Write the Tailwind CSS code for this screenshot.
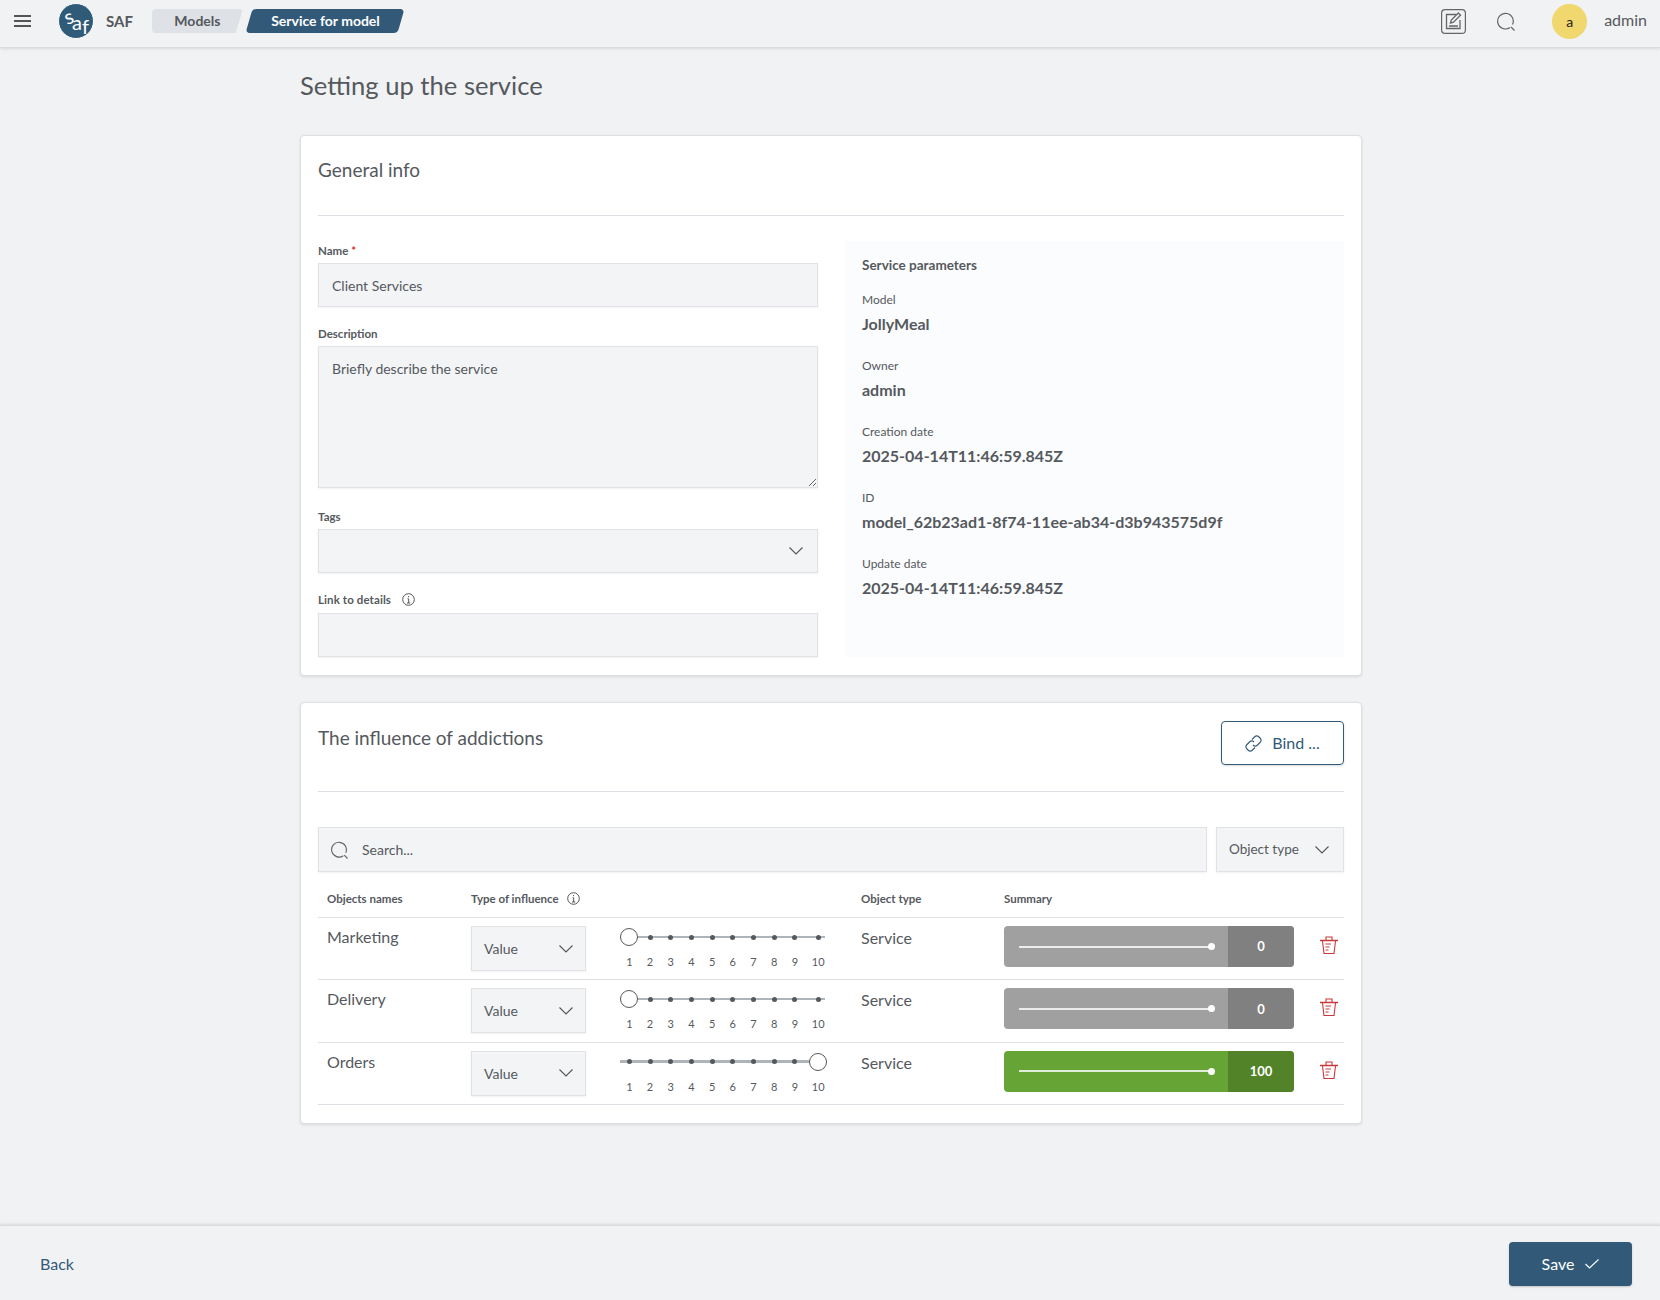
<!DOCTYPE html>
<html lang="en">
    <head>
        <meta charset="UTF-8" />
        <title>Setting up the service</title>
        <script src="https://cdn.jsdelivr.net/npm/@tailwindcss/browser@4"></script>
    </head>
    <body class="w-[1660px] h-[1300px] flex flex-col overflow-hidden bg-[#f1f2f4] text-[#55595e] font-['Lato','Noto_Sans',sans-serif]">
        <header class="h-[48px] pb-[5px] shrink-0 flex items-center bg-[#f1f2f4] border-b border-[#d9dbe0] shadow-[0_1px_3px_rgba(0,0,0,0.1)]">
            <svg class="ml-[14px] w-[17px] h-[14px]" viewBox="0 0 17 14" fill="none" stroke="#555" stroke-width="2">
                <path d="M0 2h17M0 7h17M0 12h17" />
            </svg>
            <div class="relative ml-[27px] w-[36px] h-[36px] rounded-full bg-[#2f5a78] border border-white text-white leading-none">
                <span class="absolute left-[5px] top-[2px] text-[20px] -rotate-[20deg]">s</span>
                <span class="absolute left-[13px] top-[8px] text-[20px]">a</span>
                <span class="absolute left-[23px] top-[12px] text-[20px]">f</span>
            </div>
            <span class="ml-[12px] text-[15px] font-bold">SAF</span>
            <span class="ml-[19px] w-[91px] h-[24px] pb-[2px] flex items-center justify-center bg-[#dee1e5] rounded-[4px] text-[14px] font-bold" style="clip-path: polygon(0 0, 100% 0, 92% 100%, 0 100%)">Models</span>
            <span class="ml-[6px] w-[152px] h-[24px] pb-[2px] flex items-center justify-center bg-[#325a78] text-white rounded-[4px] -skew-x-[16deg]"><span class="skew-x-[16deg] text-[14px] font-bold">Service for model</span></span>
            <svg class="ml-auto w-[25px] h-[25px]" viewBox="0 0 25 25" fill="none" stroke="#666" stroke-width="1.2">
                <rect x="0.6" y="0.6" width="23.8" height="23.8" rx="3.5" />
                <path d="M15 5.500H5.500V19.500H19V11" stroke-width="1.300" />
                <path d="M9.500 14l.8-3 7-7 2.200 2.200-7 7zM8 17h9" stroke-width="1.300" />
            </svg>
            <svg class="ml-[31px] w-[19px] h-[19px]" viewBox="0 0 19 19" fill="none" stroke="#666" stroke-width="1.2">
                <path d="M13 15.500a7.800 7.800 0 1 1 2.500-3M14 15l3.500 3.500" />
            </svg>
            <span class="ml-[36px] w-[35px] h-[35px] rounded-full flex items-center justify-center bg-[#f0d76e] text-[#222] text-[14px]">a</span>
            <span class="ml-[17px] mr-[13px] pb-[2px] text-[16px]">admin</span>
        </header>

        <main class="flex-1 pl-[300px]">
            <h1 class="h-[87px] pb-[12px] flex items-center text-[25.6px] leading-none">Setting up the service</h1>

            <section class="w-[1062px] h-[541px] bg-white border border-[#dcdfe3] rounded-[4px] shadow-[0_1px_3px_rgba(0,0,0,0.1)] px-[17px]">
                <h2 class="h-[80px] pt-[19px] border-b border-[#dcdfe3] text-[19px] leading-[30px]">General info</h2>
                <div class="flex gap-[27px] pt-[25px]">
                    <form class="w-[500px] shrink-0">
                        <label class="block h-[22px] text-[11.5px] font-bold leading-[20px]">Name <span class="text-[#c33]">*</span></label>
                        <input class="w-full h-[44px] px-[13px] bg-[#f3f4f6] border border-[#e0e2e6] shadow-[0_1px_2px_rgba(0,0,0,0.06)] text-[14px]" value="Client Services" />
                        <label class="block mt-[17px] h-[22px] text-[11.5px] font-bold leading-[20px]">Description</label>
                        <textarea class="block w-full h-[142px] px-[13px] py-[11px] bg-[#f3f4f6] border border-[#e0e2e6] shadow-[0_1px_2px_rgba(0,0,0,0.06)] text-[14px]">Briefly describe the service</textarea>
                        <label class="block mt-[19px] h-[22px] text-[11.5px] font-bold leading-[20px]">Tags</label>
                        <div class="h-[44px] pr-[14px] flex items-center justify-end bg-[#f3f4f6] border border-[#e0e2e6] shadow-[0_1px_2px_rgba(0,0,0,0.06)]">
                            <svg class="w-[14px] h-[8px]" viewBox="0 0 14 8" fill="none" stroke="#555" stroke-width="1.100"><path d="M0.500 0.500L7 7l6.500-6.500" /></svg>
                        </div>
                        <label class="flex items-center gap-[11px] mt-[14px] h-[26px] pb-[1px] text-[11.5px] font-bold tracking-[0.1px]">Link to details
                            <svg class="w-[13px] h-[13px]" viewBox="0 0 13 13" fill="none" stroke="#555"><circle cx="6.500" cy="6.500" r="5.800" /><path d="M5.500 5.800h1.200V10M5 10h3.200M6.500 3v1.200" /></svg>
                        </label>
                        <input class="w-full h-[44px] px-[13px] bg-[#f3f4f6] border border-[#e0e2e6] shadow-[0_1px_2px_rgba(0,0,0,0.06)] text-[14px]" />
                    </form>
                    <aside class="flex-1 h-[416px] px-[17px] pt-[14px] bg-[#fbfcfd]">
                        <h3 class="text-[13.5px] font-bold leading-[20px] mb-[16px]">Service parameters</h3>
                        <dl id="params"></dl>
                    </aside>
                </div>
            </section>

            <section class="w-[1062px] h-[422px] mt-[26px] bg-white border border-[#dcdfe3] rounded-[4px] shadow-[0_1px_3px_rgba(0,0,0,0.1)] px-[17px]">
                <div class="h-[89px] flex justify-between border-b border-[#dcdfe3]">
                    <h2 class="pt-[20px] text-[19px] leading-[30px]">The influence of addictions</h2>
                    <button class="mt-[18px] w-[123px] h-[44px] flex items-center justify-center gap-[10px] border border-[#325a78] rounded-[4px] shadow-[0_1px_2px_rgba(0,0,0,0.15)] text-[#325a78] text-[16px]">
                        <svg class="w-[17px] h-[17px]" viewBox="0 0 17 17" fill="none" stroke="#325a78" stroke-width="1.100">
                            <path d="M7 4.500l2.500-2.500a3.200 3.200 0 0 1 4.500 0l1 1a3.200 3.200 0 0 1 0 4.500L12.500 10a3.200 3.200 0 0 1-4.500 0" />
                            <path d="M10 12.500L7.500 15a3.200 3.200 0 0 1-4.500 0l-1-1a3.200 3.200 0 0 1 0-4.500L4.500 7a3.200 3.200 0 0 1 4.500 0" />
                        </svg>
                        Bind ...
                    </button>
                </div>
                <div class="flex gap-[9px] mt-[35px]">
                    <div class="w-[889px] h-[45px] flex items-center gap-[13px] px-[12px] bg-[#f3f4f6] border border-[#e0e2e6] shadow-[0_1px_2px_rgba(0,0,0,0.06)] text-[14px]">
                        <svg class="w-[18px] h-[18px]" viewBox="0 0 19 19" fill="none" stroke="#666" stroke-width="1.200">
                            <path d="M13 15.500a7.800 7.800 0 1 1 2.500-3M14 15l3.500 3.500" />
                        </svg>
                        Search...
                    </div>
                    <div class="flex-1 h-[45px] flex items-center justify-between pl-[12px] pr-[14px] bg-[#f3f4f6] border border-[#e0e2e6] shadow-[0_1px_2px_rgba(0,0,0,0.06)] text-[13.5px]">
                        Object type
                        <svg class="w-[14px] h-[8px]" viewBox="0 0 14 8" fill="none" stroke="#555" stroke-width="1.100"><path d="M0.500 0.500L7 7l6.500-6.500" /></svg>
                    </div>
                </div>
                <div class="h-[46px] pt-[8px] grid grid-cols-[153px_390px_143px_1fr] items-center border-b border-[#dcdfe3] text-[11.5px] font-bold">
                    <span class="pl-[9px]">Objects names</span>
                    <span class="flex items-center gap-[8px]">Type of influence
                        <svg class="w-[13px] h-[13px]" viewBox="0 0 13 13" fill="none" stroke="#555"><circle cx="6.500" cy="6.500" r="5.800" /><path d="M5.500 5.800h1.200V10M5 10h3.200M6.500 3v1.200" /></svg>
                    </span>
                    <span>Object type</span>
                    <span>Summary</span>
                </div>
                <div id="rows"></div>
            </section>
        </main>

        <footer class="h-[75px] pt-[2px] shrink-0 flex items-center justify-between pl-[40px] pr-[28px] border-t border-[#d9dbe0] shadow-[0_-1px_3px_rgba(0,0,0,0.1)]">
            <a class="text-[16px] text-[#325a78]">Back</a>
            <button class="w-[123px] h-[44px] flex items-center justify-center gap-[11px] bg-[#325a78] text-white rounded-[4px] shadow-[0_1px_2px_rgba(0,0,0,0.2)] text-[16px]">
                Save
                <svg class="w-[14px] h-[10px]" viewBox="0 0 14 10" fill="none" stroke="#fff" stroke-width="1.100"><path d="M0.500 5l4 4L13.500 0.500" /></svg>
            </button>
        </footer>

        <script>
            const PARAMS = [
                ["Model", "JollyMeal"],
                ["Owner", "admin"],
                ["Creation date", "2025-04-14T11:46:59.845Z"],
                ["ID", "model_62b23ad1-8f74-11ee-ab34-d3b943575d9f"],
                ["Update date", "2025-04-14T11:46:59.845Z"],
            ];

            const ROWS = [
                { name: "Marketing", at: 1, total: 0 },
                { name: "Delivery", at: 1, total: 0 },
                { name: "Orders", at: 10, total: 100 },
            ];

            document.getElementById("params").innerHTML = PARAMS.map(
                ([label, value]) => `<dt class="text-[12px] leading-[18px]">${label}</dt>
                    <dd class="mt-[4px] mb-[22px] text-[16px] font-bold leading-[22px]">${value}</dd>`
            ).join("");

            function sliderCells(row, isLabel) {
                return Array.from({ length: 10 }, (_, i) => {
                    const n = i + 1;
                    const cell = n === 10 ? "w-[26px]" : "w-[20.7px]";
                    const inner = isLabel
                        ? n
                        : n === row.at
                          ? `<span class="w-[18px] h-[18px] shrink-0 rounded-full bg-white border border-[#55595e]"></span>`
                          : `<span class="w-[5px] h-[5px] rounded-full bg-[#55595e]"></span>`;
                    return `<span class="${cell} shrink-0 flex items-center justify-center">${inner}</span>`;
                }).join("");
            }

            document.getElementById("rows").innerHTML = ROWS.map(
                (row) => `<div class="h-[62.33px] grid grid-cols-[153px_149px_241px_143px_316px_1fr] items-start pt-[8px] border-b border-[#dcdfe3]">
                    <span class="pl-[9px] text-[16px] leading-[22px]">${row.name}</span>
                    <div class="w-[115px] h-[45px] flex items-center justify-between px-[12px] bg-[#f3f4f6] border border-[#e0e2e6] shadow-[0_1px_2px_rgba(0,0,0,0.06)] text-[14px]">
                        Value
                        <svg class="w-[14px] h-[8px]" viewBox="0 0 14 8" fill="none" stroke="#555" stroke-width="1.100"><path d="M0.500 0.500L7 7l6.500-6.500" /></svg>
                    </div>
                    <div class="w-[206px] mt-[1px]">
                        <div class="relative h-[20px] flex items-center -ml-[1px]">
                            <span class="absolute left-[1px] right-[1px] ${row.at === 10 ? "h-[3px]" : "h-[2px]"} bg-[#aeb5ba]"></span>
                            <div class="relative flex items-center">${sliderCells(row, false)}</div>
                        </div>
                        <div class="flex -ml-[1px] mt-[8px] text-[11px] leading-[14px]">${sliderCells(row, true)}</div>
                    </div>
                    <span class="mt-[1px] text-[16px] leading-[22px]">Service</span>
                    <div class="w-[290px] h-[41px] flex rounded-[4px] overflow-hidden text-white text-[13px] font-bold ${row.total ? "bg-[#66a535]" : "bg-[#a0a0a0]"}">
                        <div class="w-[224px] flex items-center pl-[15px]">
                            <span class="w-[192px] h-[2px] bg-white/80"></span>
                            <span class="w-[7px] h-[7px] -ml-[3px] rounded-full bg-white"></span>
                        </div>
                        <span class="flex-1 flex items-center justify-center pt-[1px] ${row.total ? "bg-[#528329]" : "bg-[#808080]"}">${row.total}</span>
                    </div>
                    <svg class="w-[18px] h-[18px] mt-[10px]" viewBox="0 0 18 18" fill="none" stroke="#c83a3a" stroke-width="1.100">
                        <path d="M0 4.500h18" stroke-width="1.500" />
                        <path d="M6 4V1h6v3M2.500 5l1.500 12.500h10L15.500 5M5.500 8h5.500M5.500 11h4M5.500 14h3" />
                    </svg>
                </div>`
            ).join("");
        </script>
    </body>
</html>
